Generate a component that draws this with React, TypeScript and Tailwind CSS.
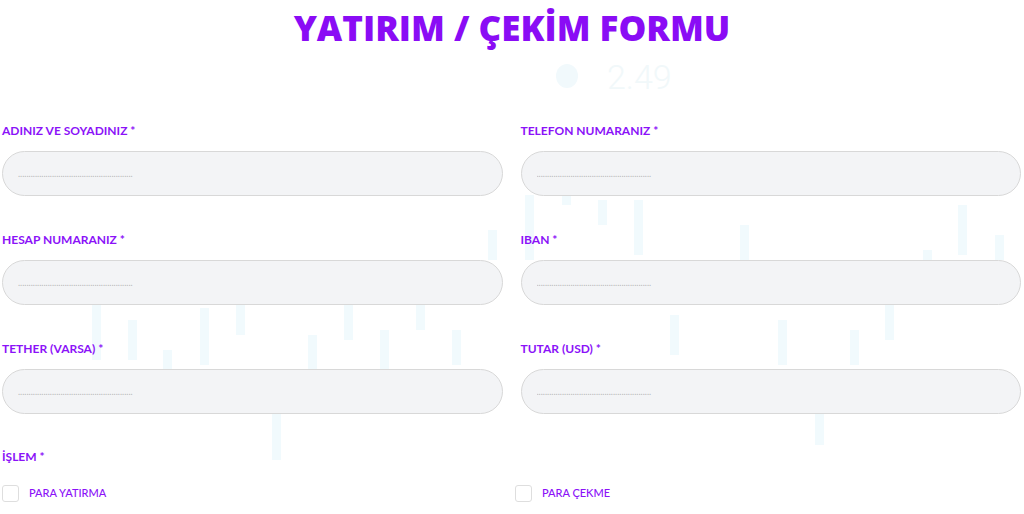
import React from 'react'

const candles: [number, number, number][] = [
  [92, 300, 360], [128, 320, 360], [163, 350, 370], [200, 308, 365], [236, 300, 335],
  [272, 405, 460], [308, 335, 380], [344, 303, 340], [380, 330, 370], [416, 300, 330],
  [452, 330, 365], [488, 230, 260], [525, 195, 260], [562, 190, 205], [598, 200, 225],
  [634, 200, 255], [670, 315, 355], [740, 225, 260], [778, 320, 365], [815, 400, 445],
  [850, 330, 365], [885, 300, 340], [923, 250, 260], [958, 205, 255], [995, 235, 260],
]

const Backdrop = () => (
  <svg className="pointer-events-none absolute inset-0 h-full w-full" viewBox="0 0 1024 514" preserveAspectRatio="none">
    {candles.map(([x, y1, y2], i) => (
      <rect key={i} x={x} y={y1} width={9} height={y2 - y1} fill="#f1fafd" />
    ))}
    <ellipse cx={567} cy={76} rx={11} ry={12} fill="#f1f9fc" />
    <text x={607} y={89} fontSize={34} fill="#f1f8fa" fontFamily="Roboto, sans-serif" fontWeight={300}>2.49</text>
  </svg>
)

const Field = (props: { label: string }) => {
  return (
    <div className="flex flex-col">
      <label className="h-[18px] text-[12px] font-bold leading-[18px] text-[#8b12f8]">{props.label}</label>
      <input
        className="mt-[11px] h-[45px] w-full rounded-full border border-[#d8d8d8] bg-[#f3f4f6] pl-[15px] text-[9px] outline-none placeholder:text-[#b8b8b8]"
        placeholder="......................................................"
      />
    </div>
  )
}

const Check = (props: { label: string }) => (
  <label className="flex items-center gap-[10px]">
    <span className="h-[17px] w-[17px] rounded-[3px] border border-[#dedede] bg-white" />
    <span className="text-[11px] font-medium text-[#8b12f8]">{props.label}</span>
  </label>
)

export default function App() {
  return (
    <main className="relative h-[514px] w-[1024px] overflow-hidden bg-white" style={{ fontFamily: 'Lato, "Noto Sans", sans-serif' }}>
      <Backdrop />
      <div className="relative px-[2px]">
        <h1 className="pt-[7px] text-center text-[35px] font-black leading-[41px] text-[#8a0cf5]" style={{ fontFamily: '"Open Sans", Lato, sans-serif' }}>
          YATIRIM / ÇEKİM FORMU
        </h1>

        <div className="mt-[74px] grid grid-cols-2 gap-x-[18px] gap-y-[35px] pr-[1px]">
          <Field label="ADINIZ VE SOYADINIZ *" />
          <Field label="TELEFON NUMARANIZ *" />
          <Field label="HESAP NUMARANIZ *" />
          <Field label="IBAN *" />
          <Field label="TETHER (VARSA) *" />
          <Field label="TUTAR (USD) *" />
        </div>

        <div className="mt-[34px] h-[18px] text-[12px] font-bold leading-[18px] text-[#8b12f8]">İŞLEM *</div>
        <div className="mt-[19px] flex">
          <div className="w-[513px]">
            <Check label="PARA YATIRMA" />
          </div>
          <Check label="PARA ÇEKME" />
        </div>
      </div>
    </main>
  )
}
